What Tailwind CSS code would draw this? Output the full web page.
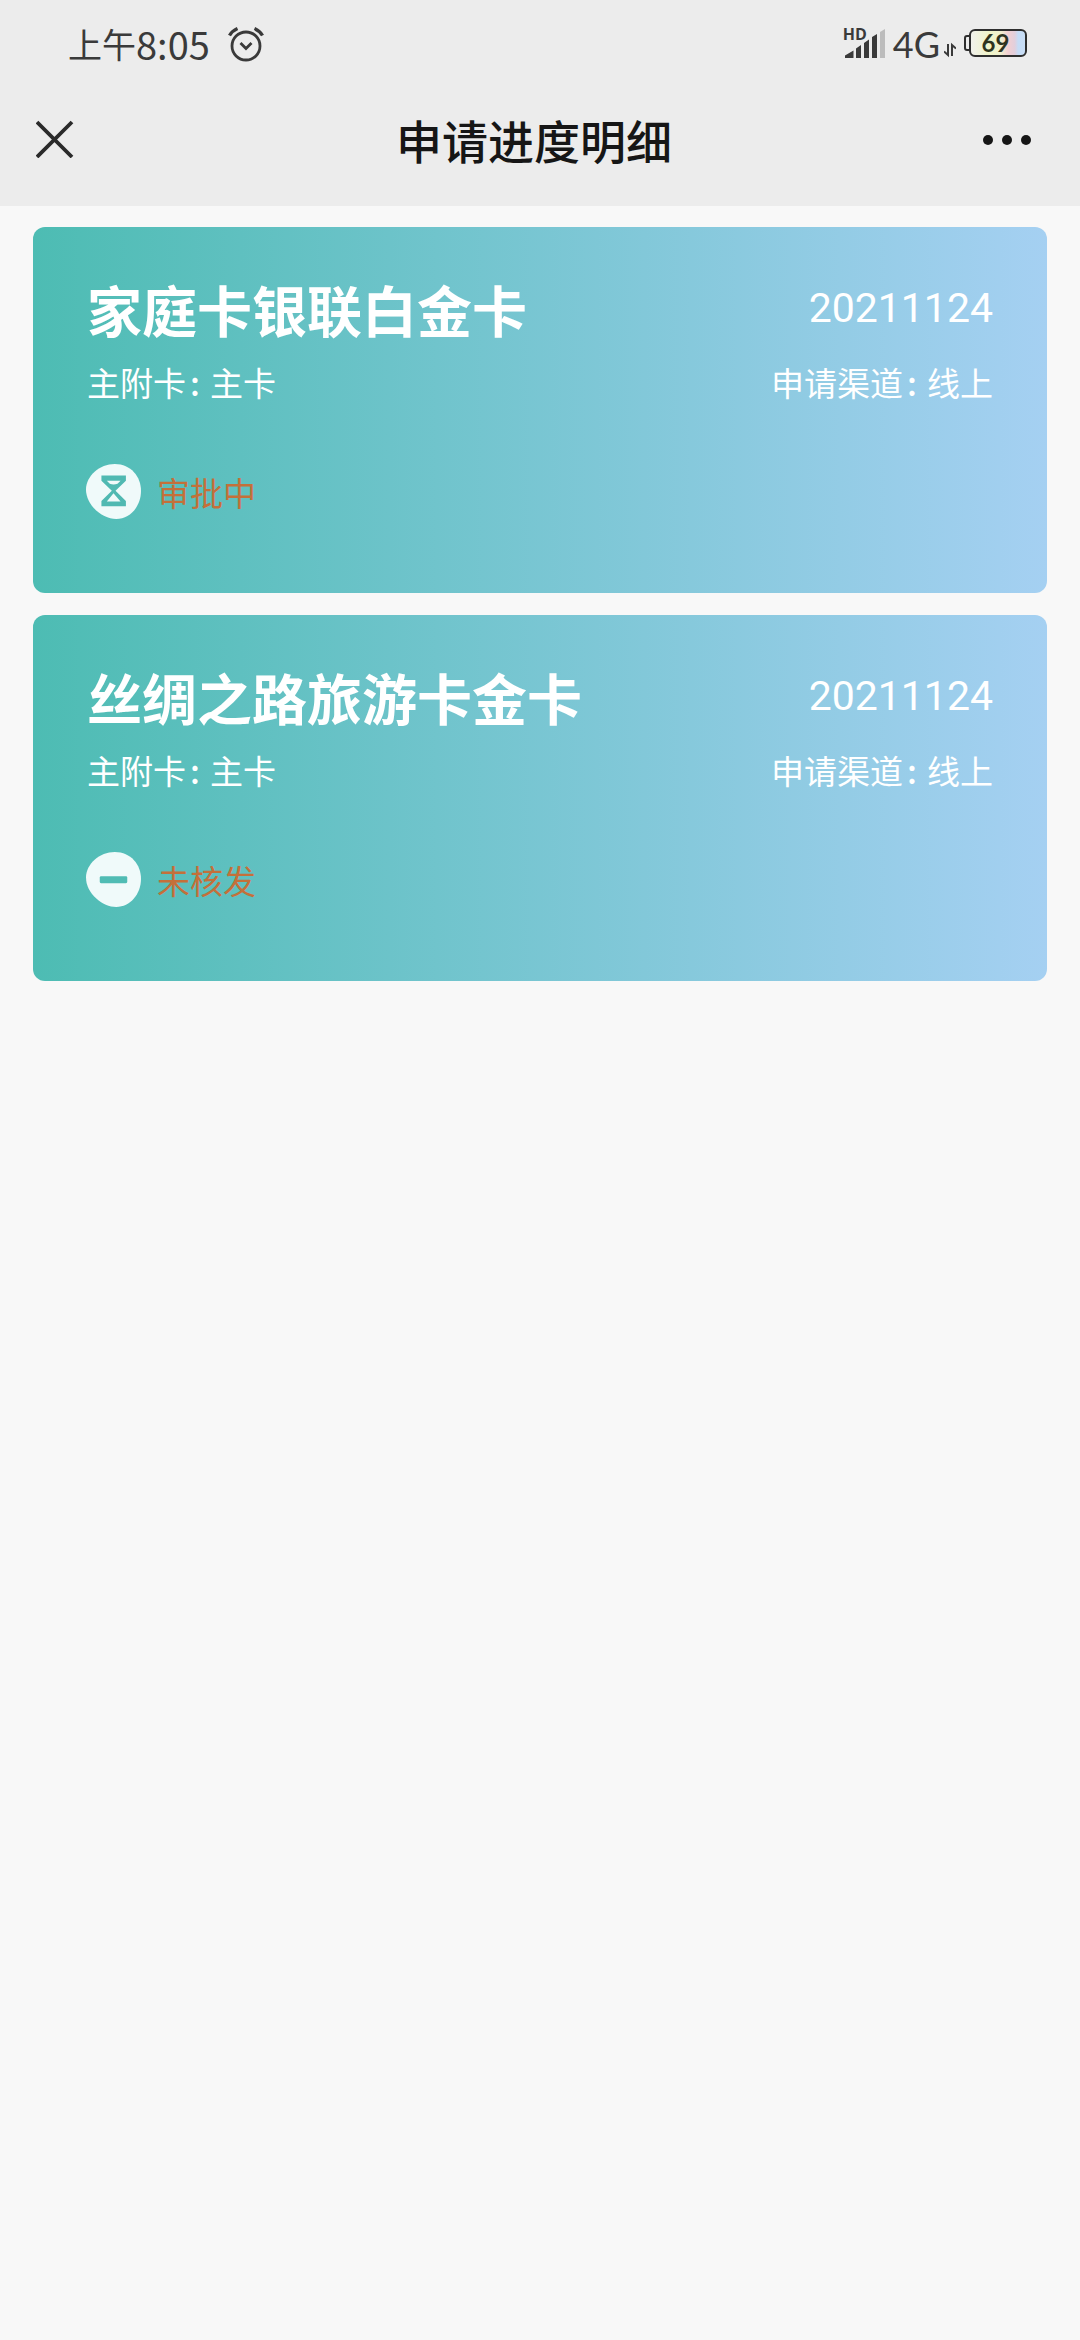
<!DOCTYPE html>
<html lang="zh-CN">
<head>
<meta charset="utf-8">
<meta name="viewport" content="width=device-width, initial-scale=1">
<title>申请进度明细</title>
<script src="https://cdn.jsdelivr.net/npm/@tailwindcss/browser@4"></script>
</head>
<body class="min-h-screen bg-[#f8f8f8] font-['Noto_Sans_CJK_SC',sans-serif]">
  <header class="bg-[#ececec] pb-4">
    <!-- System status bar -->
    <div class="flex h-[88px] items-center justify-between pl-[68px] pr-[53px] text-[#3a3a3a]">
      <div class="flex items-center">
        <span class="text-[34px] leading-none">上午</span>
        <span class="text-[38px] leading-none">8:05</span>
        <svg class="ml-[18px] size-9" viewBox="0 0 36 36" fill="none" stroke="currentColor" stroke-width="2.8" aria-label="闹钟">
          <circle cx="18" cy="20" r="14"/>
          <path d="M12.500 17 18 22.500 23.500 17"/>
          <path d="M1.500 9.500 C3.500 6 6 4 9.500 2.500 M34.500 9.500 C32.500 6 30 4 26.500 2.500" stroke-width="3.400"/>
        </svg>
      </div>
      <div class="flex items-center">
        <div class="relative h-8 w-[42px]">
          <span class="absolute left-0 -top-1 font-['Open_Sans',sans-serif] text-[16px] font-bold leading-5">HD</span>
          <svg class="h-8 w-[42px]" viewBox="0 0 42 32" fill="currentColor" aria-label="信号">
            <path d="M2 30 V27.500 L10.500 22.500 V30Z M13 30 V20.500 L18 17 V30Z M21 30 V15 L26 11.500 V30Z M29 30 V9 L34 6 V30Z"/>
            <path d="M37 30 V4 L42 1 V30Z" fill="#bcbcbc"/>
          </svg>
        </div>
        <span class="pl-2 font-['Lato',sans-serif] text-[36px] leading-[44px]">4G</span>
        <svg class="ml-1 mt-3 h-4 w-3" viewBox="0 0 12 16" fill="none" stroke="currentColor" stroke-width="2" aria-label="数据">
          <path d="M4 2V13L0 9.500 M8 14V3L12 6.500"/>
        </svg>
        <div class="relative ml-2 h-[30px] w-[63px]">
          <svg class="h-7 w-[63px]" viewBox="0 0 63 28" aria-hidden="true">
            <defs>
              <linearGradient id="charge">
                <stop offset="0" stop-color="#f1f1ee"/>
                <stop offset=".35" stop-color="#f0f4c8"/>
                <stop offset=".55" stop-color="#eff0cf"/>
                <stop offset=".68" stop-color="#f2cfd2"/>
                <stop offset=".8" stop-color="#e2cfdc"/>
                <stop offset=".86" stop-color="#c6dcf6"/>
                <stop offset="1" stop-color="#c9def5"/>
              </linearGradient>
            </defs>
            <path d="M6 7 H3 Q1 7 1 9 V19 Q1 21 3 21 H6" fill="none" stroke="#2e2e2e" stroke-width="2"/>
            <rect x="6" y="1" width="56" height="26" rx="5" fill="url(#charge)" stroke="#2e2e2e" stroke-width="2"/>
          </svg>
          <span class="absolute inset-x-0 -top-px text-center font-['Lato',sans-serif] text-[24px] font-bold leading-[30px] text-[#2e331f]">69</span>
        </div>
      </div>
    </div>
    <!-- Page title bar -->
    <nav class="grid h-[102px] grid-cols-[1fr_auto_1fr] items-center pl-9 pr-12 text-[#161616]">
      <button type="button" class="size-[38px]" aria-label="关闭">
        <svg class="size-full" viewBox="0 0 38 38" fill="none" stroke="#2a2a2a" stroke-width="3.800"><path d="M1 2 36 37 M36 2 1 37"/></svg>
      </button>
      <h1 class="text-[46px] font-medium leading-[60px]">申请进度明细</h1>
      <button type="button" class="h-[38px] w-[50px] justify-self-end" aria-label="更多">
        <svg class="size-full" viewBox="0 0 50 38" fill="currentColor"><circle cx="6" cy="20" r="5"/><circle cx="25" cy="20" r="5"/><circle cx="44" cy="20" r="5"/></svg>
      </button>
    </nav>
  </header>

  <main class="flex flex-col gap-[22px] px-[33px] py-[21px]">
    <article class="rounded-xl bg-linear-to-r/srgb from-[#4dbcb3] to-[#a5d0f2] px-[54px] pb-[74px] pt-[46px] text-white">
      <div class="flex items-center justify-between">
        <h2 class="text-[55px] font-bold leading-[70px]">家庭卡银联白金卡</h2>
        <time datetime="2021-11-24" class="font-['Roboto',sans-serif] text-[41px] leading-[62px]">20211124</time>
      </div>
      <div class="mt-[15px] flex justify-between text-[33px] leading-[48px]">
        <p>主附卡<span class="inline-block w-6 pl-1 font-medium">:</span>主卡</p>
        <p>申请渠道<span class="inline-block w-6 pl-1 font-medium">:</span>线上</p>
      </div>
      <div class="-ml-px mt-[58px] flex items-center gap-4">
        <svg class="size-[55px]" viewBox="0 0 164 164" aria-hidden="true">
          <path d="M86 0 C134 0 164 38 164 80 C164 126 132 164 90 164 C50 164 0 124 0 76 C0 36 40 0 86 0Z" fill="#f0fafa"/>
          <path d="M46 34 H119 V50 L88 80 L119 110 V126 H46 V110 L77 80 L46 50Z" fill="#50b9b2"/>
          <path d="M62 50 H103 L94 59 Q82 63 71 59Z M82 87 L103 112 H62Z" fill="#f0fafa"/>
        </svg>
        <p class="text-[33px] leading-[48px] text-[#c4703a]">审批中</p>
      </div>
    </article>

    <article class="rounded-xl bg-linear-to-r/srgb from-[#4dbcb3] to-[#a5d0f2] px-[54px] pb-[74px] pt-[46px] text-white">
      <div class="flex items-center justify-between">
        <h2 class="text-[55px] font-bold leading-[70px]">丝绸之路旅游卡金卡</h2>
        <time datetime="2021-11-24" class="font-['Roboto',sans-serif] text-[41px] leading-[62px]">20211124</time>
      </div>
      <div class="mt-[15px] flex justify-between text-[33px] leading-[48px]">
        <p>主附卡<span class="inline-block w-6 pl-1 font-medium">:</span>主卡</p>
        <p>申请渠道<span class="inline-block w-6 pl-1 font-medium">:</span>线上</p>
      </div>
      <div class="-ml-px mt-[58px] flex items-center gap-4">
        <svg class="size-[55px]" viewBox="0 0 164 164" aria-hidden="true">
          <path d="M86 0 C134 0 164 38 164 80 C164 126 132 164 90 164 C50 164 0 124 0 76 C0 36 40 0 86 0Z" fill="#f0fafa"/>
          <rect x="41" y="72" width="82" height="21" rx="4" fill="#50bcb4"/>
        </svg>
        <p class="text-[33px] leading-[48px] text-[#c4703a]">未核发</p>
      </div>
    </article>
  </main>
</body>
</html>
